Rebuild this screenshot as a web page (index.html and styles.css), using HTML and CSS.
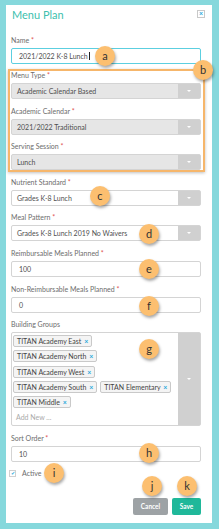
FILE: index.html
```html
<!DOCTYPE html>
<html lang="en">
<head>
    <meta charset="UTF-8">
    <meta name="viewport" content="width=device-width, initial-scale=1.0">
    <title>Menu Plan</title>
    <link rel="stylesheet" href="styles.css">
</head>
<body>
    <div class="panel">
        <div class="panel-header">
            <h1 class="title">Menu Plan</h1>
            <span class="close-btn">&times;</span>
        </div>

        <div class="field">
            <label class="label">Name <span class="req">*</span></label>
            <div class="input focused">2021/2022 K-8 Lunch<span class="caret"></span></div>
        </div>

        <div class="field">
            <label class="label">Menu Type <span class="req">*</span></label>
            <div class="select disabled"><span class="value">Academic Calendar Based</span><span class="arrow"></span></div>
        </div>

        <div class="field">
            <label class="label">Academic Calendar <span class="req">*</span></label>
            <div class="select disabled"><span class="value">2021/2022 Traditional</span><span class="arrow"></span></div>
        </div>

        <div class="field">
            <label class="label">Serving Session <span class="req">*</span></label>
            <div class="select disabled"><span class="value">Lunch</span><span class="arrow"></span></div>
        </div>

        <div class="field">
            <label class="label">Nutrient Standard <span class="req">*</span></label>
            <div class="select"><span class="value">Grades K-8 Lunch</span><span class="arrow"></span></div>
        </div>

        <div class="field">
            <label class="label">Meal Pattern <span class="req">*</span></label>
            <div class="select"><span class="value">Grades K-8 Lunch 2019 No Waivers</span><span class="arrow"></span></div>
        </div>

        <div class="field">
            <label class="label">Reimbursable Meals Planned <span class="req">*</span></label>
            <div class="input">100</div>
        </div>

        <div class="field">
            <label class="label">Non-Reimbursable Meals Planned <span class="req">*</span></label>
            <div class="input">0</div>
        </div>

        <div class="field">
            <label class="label">Building Groups</label>
            <div class="multi">
                <div class="tags">
                    <span class="tag">TITAN Academy East <span class="x">&times;</span></span>
                    <span class="tag">TITAN Academy North <span class="x">&times;</span></span>
                    <span class="tag">TITAN Academy West <span class="x">&times;</span></span>
                    <span class="tag">TITAN Academy South <span class="x">&times;</span></span>
                    <span class="tag">TITAN Elementary <span class="x">&times;</span></span>
                    <span class="tag">TITAN Middle <span class="x">&times;</span></span>
                    <span class="add-new">Add New ...</span>
                </div>
                <span class="arrow"></span>
            </div>
        </div>

        <div class="field">
            <label class="label">Sort Order <span class="req">*</span></label>
            <div class="input">10</div>
        </div>

        <div class="active-row">
            <span class="checkbox">&#10004;</span>
            <span class="active-text">Active</span>
        </div>

        <div class="buttons">
            <button type="button" class="btn btn-cancel">Cancel</button>
            <button type="button" class="btn btn-save">Save</button>
        </div>

        <!-- annotation overlays -->
        <div class="highlight"></div>
        <span class="callout" style="left: 89px; top: 41px;">a</span>
        <span class="callout" style="left: 187px; top: 55px;">b</span>
        <span class="callout" style="left: 84px; top: 181px;">c</span>
        <span class="callout" style="left: 133px; top: 219px;">d</span>
        <span class="callout" style="left: 133px; top: 254px;">e</span>
        <span class="callout" style="left: 133px; top: 291px;">f</span>
        <span class="callout" style="left: 133px; top: 334px;">g</span>
        <span class="callout" style="left: 133px; top: 438px;">h</span>
        <span class="callout" style="left: 38px; top: 458px;">i</span>
        <span class="callout" style="left: 136px; top: 471px;">j</span>
        <span class="callout" style="left: 171px; top: 471px;">k</span>
    </div>
</body>
</html>
```

FILE: styles.css
```css
body {
    font-family: Lato, "Open Sans", sans-serif;
    background-color: #86d8dc;
    margin: 0;
    padding: 0;
}

.panel {
    position: relative;
    box-sizing: border-box;
    margin: 5px 7px 6px 6px;
    height: 518px;
    padding: 0 11px 0 5px;
    background-color: #fff;
}

.panel-header {
    position: relative;
    height: 29.5px;
}

.title {
    margin: 0;
    padding: 4px 0 0 1px;
    font-size: 11px;
    line-height: 12px;
    font-weight: normal;
    color: #3dbfae;
}

.close-btn {
    position: absolute;
    right: -4px;
    top: 5px;
    box-sizing: border-box;
    width: 8px;
    height: 8px;
    border: 1px solid #c9c9c9;
    color: #2aa9db;
    font-size: 7px;
    line-height: 5px;
    text-align: center;
    font-weight: bold;
}

.field {
    margin-bottom: 6.6px;
}

.label {
    display: block;
    height: 10px;
    margin-bottom: 3px;
    font-size: 7px;
    line-height: 10px;
    color: #6d6d6d;
}

.req {
    color: #e05050;
}

.input,
.select {
    box-sizing: border-box;
    height: 16px;
    border: 1px solid #d4d4d4;
    border-radius: 2px;
    font-size: 7px;
    line-height: 14px;
    color: #505050;
}

.input {
    padding-left: 7px;
    background-color: #fff;
}

.input.focused {
    border-color: #5ccfe0;
    padding-left: 7px;
}

.caret {
    display: inline-block;
    width: 1px;
    height: 8px;
    margin-left: 1px;
    vertical-align: -1px;
    background-color: #222;
}

.select {
    display: flex;
    background-color: #fff;
}

.select.disabled {
    background-color: #e6e6e6;
}

.select .value {
    flex: 1;
    padding-left: 5px;
}

.arrow {
    position: relative;
    width: 22px;
    background-color: #d0d0d0;
}

.arrow::after {
    content: "";
    position: absolute;
    left: 50%;
    top: 50%;
    margin: -1px 0 0 -2px;
    border-left: 2px solid transparent;
    border-right: 2px solid transparent;
    border-top: 2px solid #fff;
}

.multi {
    box-sizing: border-box;
    display: flex;
    height: 94px;
    border: 1px solid #d4d4d4;
    border-radius: 2px;
}

.tags {
    flex: 1;
    display: flex;
    flex-wrap: wrap;
    align-content: flex-start;
    gap: 3.2px 3px;
    padding: 2px 1px;
}

.tag {
    box-sizing: border-box;
    height: 12px;
    padding: 0 3px;
    border: 1px solid #c9c9c9;
    border-radius: 2px;
    background-color: #f4f4f4;
    font-size: 7px;
    line-height: 10px;
    color: #444;
    white-space: nowrap;
}

.tag .x {
    margin-left: 1px;
    color: #2aa9db;
    font-weight: bold;
}

.add-new {
    width: 100%;
    padding: 1px 0 0 3px;
    font-size: 7px;
    line-height: 10px;
    color: #aaa;
}

.active-row {
    display: flex;
    align-items: center;
    height: 10px;
    margin-top: 6px;
    margin-left: -2px;
}

.checkbox {
    box-sizing: border-box;
    width: 7px;
    height: 7px;
    border: 1px solid #d0d0d0;
    font-size: 5px;
    line-height: 5px;
    text-align: center;
    color: #2aa9db;
}

.active-text {
    margin-left: 6px;
    font-size: 7px;
    color: #6d6d6d;
}

.buttons {
    display: flex;
    justify-content: flex-end;
    gap: 4px;
    margin-top: 20px;
}

.btn {
    height: 17px;
    border: none;
    border-radius: 2px;
    padding: 0;
    font-family: Lato, sans-serif;
    font-size: 6.5px;
    font-weight: bold;
    color: #fff;
    cursor: pointer;
}

.btn-cancel {
    width: 35px;
    background-color: #9da2a5;
}

.btn-save {
    width: 29px;
    background-color: #1fb89a;
}

.highlight {
    position: absolute;
    left: 2px;
    top: 64px;
    width: 197px;
    height: 103px;
    box-sizing: border-box;
    border: 2px solid #f6b66b;
    box-shadow: 0 1px 3px rgba(0, 0, 0, 0.25);
}

.callout {
    position: absolute;
    width: 20px;
    height: 20px;
    border-radius: 50%;
    background-color: #fcbf70;
    box-shadow: 1px 2px 3px rgba(0, 0, 0, 0.35);
    font-size: 11px;
    line-height: 19px;
    text-align: center;
    color: #333;
}
```
